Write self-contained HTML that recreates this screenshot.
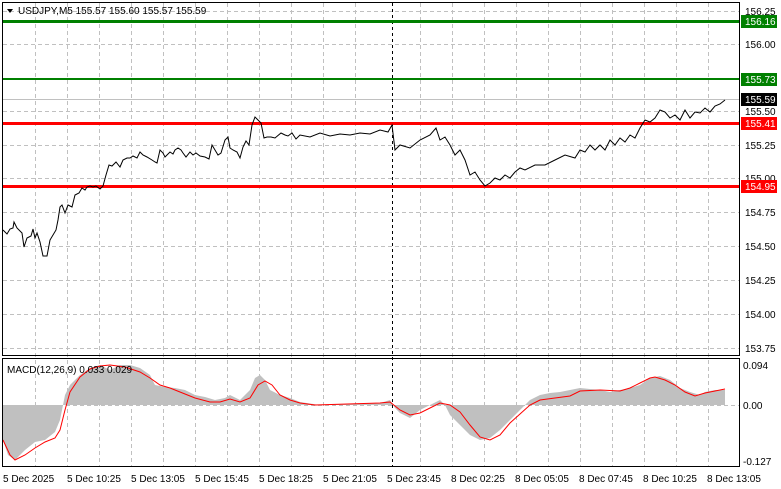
<!DOCTYPE html>
<html><head><meta charset="utf-8"><style>
html,body{margin:0;padding:0;background:#fff;width:781px;height:489px;overflow:hidden}
svg{display:block;font-family:"Liberation Sans",sans-serif}
</style></head><body>
<svg width="781" height="489" viewBox="0 0 781 489" xmlns="http://www.w3.org/2000/svg">
<rect width="781" height="489" fill="#fff"/>
<g stroke="#c0c0c0" stroke-width="1" stroke-dasharray="4,3" shape-rendering="crispEdges">
<line x1="3" y1="11.5" x2="739" y2="11.5"/><line x1="3" y1="44.5" x2="739" y2="44.5"/>
<line x1="3" y1="78.5" x2="739" y2="78.5"/><line x1="3" y1="111.5" x2="739" y2="111.5"/>
<line x1="3" y1="145.5" x2="739" y2="145.5"/><line x1="3" y1="178.5" x2="739" y2="178.5"/>
<line x1="3" y1="212.5" x2="739" y2="212.5"/><line x1="3" y1="246.5" x2="739" y2="246.5"/>
<line x1="3" y1="280.5" x2="739" y2="280.5"/><line x1="3" y1="314.5" x2="739" y2="314.5"/>
<line x1="3" y1="348.5" x2="739" y2="348.5"/>
<line x1="3" y1="405.5" x2="739" y2="405.5"/>
<g id="v">
<line x1="35.5" y1="3" x2="35.5" y2="467"/><line x1="67.5" y1="3" x2="67.5" y2="467"/>
<line x1="99.5" y1="3" x2="99.5" y2="467"/><line x1="131.5" y1="3" x2="131.5" y2="467"/>
<line x1="163.5" y1="3" x2="163.5" y2="467"/><line x1="195.5" y1="3" x2="195.5" y2="467"/>
<line x1="227.5" y1="3" x2="227.5" y2="467"/><line x1="259.5" y1="3" x2="259.5" y2="467"/>
<line x1="291.5" y1="3" x2="291.5" y2="467"/><line x1="323.5" y1="3" x2="323.5" y2="467"/>
<line x1="355.5" y1="3" x2="355.5" y2="467"/><line x1="420.5" y1="3" x2="420.5" y2="467"/>
<line x1="452.5" y1="3" x2="452.5" y2="467"/><line x1="484.5" y1="3" x2="484.5" y2="467"/>
<line x1="516.5" y1="3" x2="516.5" y2="467"/><line x1="548.5" y1="3" x2="548.5" y2="467"/>
<line x1="580.5" y1="3" x2="580.5" y2="467"/><line x1="612.5" y1="3" x2="612.5" y2="467"/>
<line x1="644.5" y1="3" x2="644.5" y2="467"/><line x1="676.5" y1="3" x2="676.5" y2="467"/>
<line x1="708.5" y1="3" x2="708.5" y2="467"/>
</g>
</g>
<line x1="3" y1="99.5" x2="739" y2="99.5" stroke="#c0c0c0" shape-rendering="crispEdges"/>
<line x1="392.5" y1="3" x2="392.5" y2="467" stroke="#000" stroke-dasharray="3,3" shape-rendering="crispEdges"/>
<!-- levels -->
<rect x="3" y="20" width="736" height="3" fill="#008000"/>
<rect x="3" y="78" width="736" height="2" fill="#008000"/>
<rect x="3" y="122" width="736" height="3" fill="#ff0000"/>
<rect x="3" y="185" width="736" height="3" fill="#ff0000"/>
<!-- price -->
<polyline fill="none" stroke="#000" stroke-width="1" points="3,230 7,234 10,229 13,228 14,222 17,228 22,233 24,247 27,238 31,236 33,229 35,238 37,233 40,242 43,256 47,256 50,240 53,235 56,230 58,220 60,207 62,205 65,213 68,205 72,207 75,195 79,193 82,188 85,190 87,187 90,186 93,187 96,186 100,189 103,186 106,175 109,165 112,166 116,162 120,167 123,160 127,158 130,158 133,156 137,158 140,152 143,155 147,157 152,160 155,162 157,163 160,150 163,153 165,157 170,152 173,154 175,150 178,148 181,150 183,153 186,157 190,152 193,155 196,153 200,156 205,157 209,159 212,145 215,150 218,155 221,153 225,140 228,137 230,148 233,150 237,152 240,158 243,147 246,141 249,145 252,125 255,117 258,120 261,123 264,138 267,137 271,137 275,138 281,133 285,135 288,136 292,133 296,139 300,135 310,137 320,133 330,136 340,134 350,135 360,133 370,134 380,130 388,132 392,125 395,150 400,145 410,148 420,140 430,135 436,128 440,140 445,137 450,145 455,155 460,150 465,160 470,175 475,172 480,180 485,186 490,183 495,178 500,180 505,175 510,178 515,172 520,168 525,170 535,165 545,165 555,160 565,155 575,158 580,150 585,152 590,145 595,150 600,145 605,150 610,140 615,145 620,138 625,142 630,135 635,138 640,128 645,120 650,122 655,118 660,110 665,112 670,118 675,115 680,120 685,110 690,118 695,112 700,113 705,108 710,112 715,106 720,104 725,100"/>
<!-- MACD hist -->
<polygon fill="#c0c0c0" points="3,405 3,440 8,455 15,460 25,450 35,442 45,440 55,432 60,420 65,395 70,385 80,375 90,368 100,365 110,370 120,365 130,365 140,368 150,375 155,385 165,387 175,388 185,390 195,395 205,397 215,400 225,398 230,395 240,400 250,390 255,378 260,375 265,380 270,390 280,395 290,398 300,402 320,405 380,403 390,400 395,408 400,413 410,418 420,410 430,405 440,400 445,405 450,415 460,425 470,435 480,440 490,438 500,430 510,420 520,410 530,400 540,395 550,393 560,392 570,390 580,388 590,389 600,390 610,392 620,390 630,388 640,385 650,378 660,376 670,380 680,388 690,392 700,395 705,392 715,390 725,390 725,405"/>
<polyline fill="none" stroke="#ff0000" stroke-width="1" points="3,440 10,455 15,460 25,455 35,448 45,442 55,438 60,430 65,410 70,392 80,377 90,369 100,366 110,365 125,367 140,372 150,378 160,385 170,388 180,392 195,398 210,402 220,402 230,399 240,402 250,398 258,385 265,381 272,385 280,395 290,400 300,403 315,405 380,403 390,402 400,410 410,415 420,413 430,408 440,403 450,405 460,412 470,425 480,437 490,440 500,435 510,423 520,414 530,405 540,400 555,398 570,396 580,391 600,390 620,391 630,388 640,383 650,378 655,377 665,380 675,385 685,392 695,396 705,393 715,391 725,389"/>
<!-- borders -->
<g fill="none" stroke="#000" shape-rendering="crispEdges">
<rect x="2.5" y="2.5" width="737" height="353"/>
<rect x="2.5" y="358.5" width="737" height="108"/>
</g>
<!-- header -->
<polygon points="7,9 13,9 10,13" fill="#000"/>
<text x="18" y="14" font-size="10" fill="#000">USDJPY,M5  155.57 155.60 155.57 155.59</text>
<text x="7" y="373" font-size="10" fill="#000">MACD(12,26,9) 0.033 0.029</text>
<!-- right axis -->
<g font-size="10" fill="#000">
<text x="745" y="15">156.25</text><text x="745" y="48">156.00</text>
<text x="745" y="115">155.50</text><text x="745" y="149">155.25</text>
<text x="745" y="182">155.00</text><text x="745" y="216">154.75</text>
<text x="745" y="250">154.50</text><text x="745" y="284">154.25</text>
<text x="745" y="318">154.00</text><text x="745" y="352">153.75</text>
<text x="743" y="369">0.094</text><text x="743" y="409">0.00</text><text x="743" y="465">-0.127</text>
</g>
<rect x="741" y="15" width="36" height="13" fill="#008000"/><text x="745" y="25" font-size="10" fill="#fff">156.16</text>
<rect x="741" y="73" width="36" height="13" fill="#008000"/><text x="745" y="83" font-size="10" fill="#fff">155.73</text>
<rect x="741" y="93" width="36" height="13" fill="#000"/><text x="745" y="103" font-size="10" fill="#fff">155.59</text>
<rect x="741" y="117" width="36" height="13" fill="#ff0000"/><text x="745" y="127" font-size="10" fill="#fff">155.41</text>
<rect x="741" y="180" width="36" height="13" fill="#ff0000"/><text x="745" y="190" font-size="10" fill="#fff">154.95</text>
<!-- time axis -->
<g font-size="10" fill="#000">
<text x="3" y="482">5 Dec 2025</text><text x="67" y="482">5 Dec 10:25</text>
<text x="131" y="482">5 Dec 13:05</text><text x="195" y="482">5 Dec 15:45</text>
<text x="259" y="482">5 Dec 18:25</text><text x="323" y="482">5 Dec 21:05</text>
<text x="387" y="482">5 Dec 23:45</text><text x="451" y="482">8 Dec 02:25</text>
<text x="515" y="482">8 Dec 05:05</text><text x="579" y="482">8 Dec 07:45</text>
<text x="643" y="482">8 Dec 10:25</text><text x="707" y="482">8 Dec 13:05</text>
</g>
</svg>
</body></html>
